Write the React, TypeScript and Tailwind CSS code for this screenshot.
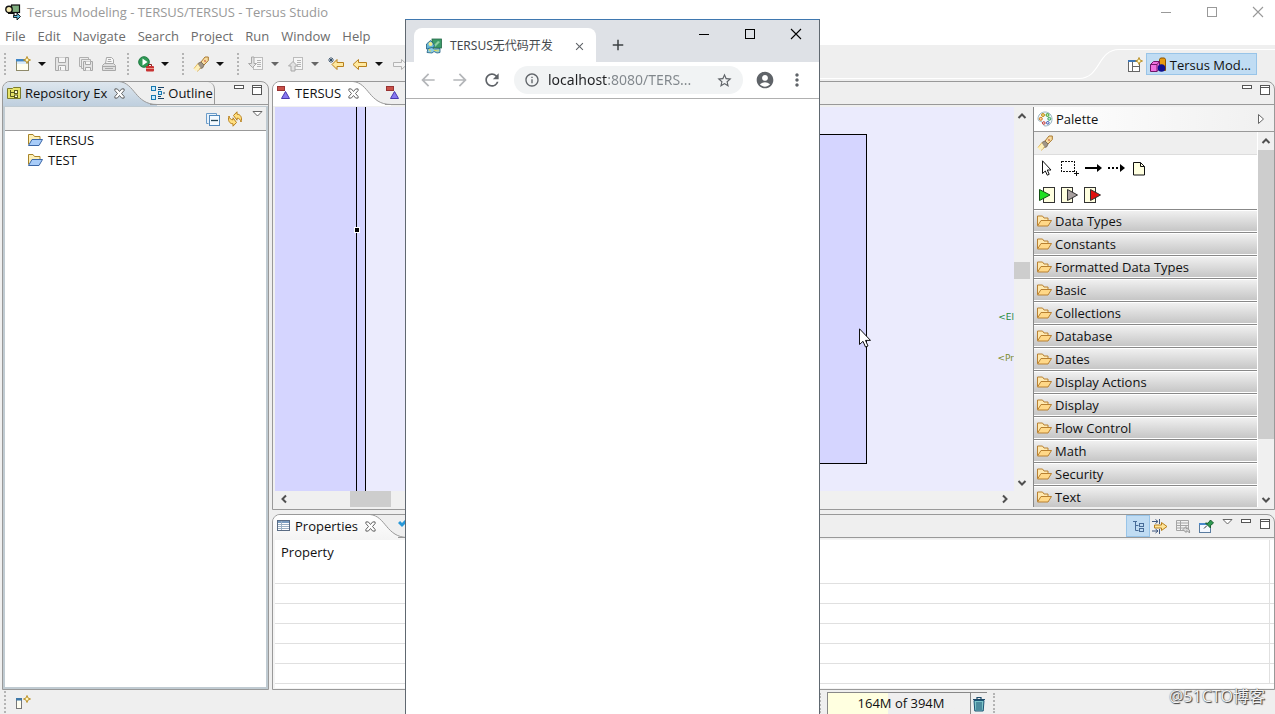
import React from 'react';
import {
  MdAccountCircle,
  MdAdd,
  MdArrowBack,
  MdArrowForward,
  MdClose,
  MdInfoOutline,
  MdMoreVert,
  MdRefresh,
  MdStarBorder,
} from 'react-icons/md';

type IconProps = { children: React.ReactNode; className?: string; box?: string };

function Icon({ children, className = 'size-4', box = '0 0 16 16' }: IconProps) {
  return (
    <svg viewBox={box} className={`block shrink-0 ${className}`} fill="none" aria-hidden="true">
      {children}
    </svg>
  );
}

function ToolButton({ label, children, className = '' }: { label: string; children: React.ReactNode; className?: string }) {
  return (
    <button type="button" aria-label={label} className={`block shrink-0 ${className}`}>
      {children}
    </button>
  );
}

/* ---------- window chrome icons ---------- */

const MinimizeLine = () => (
  <Icon className="size-3" box="0 0 12 12">
    <path d="M1 6.5h10" stroke="currentColor" shapeRendering="crispEdges" />
  </Icon>
);
const MaximizeBox = () => (
  <Icon className="size-3" box="0 0 12 12">
    <rect x="1.5" y="1.5" width="9" height="9" stroke="currentColor" shapeRendering="crispEdges" />
  </Icon>
);
const CloseCross = () => (
  <Icon className="size-3" box="0 0 12 12">
    <path d="M1 1l10 10M11 1L1 11" stroke="currentColor" strokeWidth="1.1" />
  </Icon>
);
const PaneMin = () => (
  <Icon className="h-3 w-[11px]" box="0 0 11 12">
    <rect x=".5" y="1.5" width="9" height="3" stroke="#555" fill="#fff" shapeRendering="crispEdges" />
  </Icon>
);
const PaneMax = () => (
  <Icon className="h-3 w-[11px]" box="0 0 11 12">
    <rect x=".5" y="1.5" width="9" height="9" stroke="#555" fill="#fff" shapeRendering="crispEdges" />
    <path d="M1 3.5h9" stroke="#555" shapeRendering="crispEdges" />
  </Icon>
);
const ViewMenu = () => (
  <Icon className="h-3 w-[11px]" box="0 0 11 12">
    <path d="M1 1.5h9L5.500 6z" stroke="#666" fill="#fff" />
  </Icon>
);
const TabClose = () => (
  <Icon className="size-[11px]" box="0 0 12 12">
    <path
      d="M1 1h2.600L6 3.800 8.400 1H11v1.800L8.200 6 11 9.200V11H8.400L6 8.200 3.600 11H1V9.200L3.800 6 1 2.800z"
      stroke="#555"
      fill="#fff"
    />
  </Icon>
);

/* ---------- workbench icons ---------- */

const AppIcon = () => (
  <Icon>
    <rect x="6.500" y="1" width="8" height="7.500" fill="#7fae7f" stroke="#111" strokeWidth="1.200" />
    <circle cx="4" cy="5.500" r="3.200" fill="#f5eab0" stroke="#111" strokeWidth="1.400" />
    <path d="M3 9.500h6v2.500" stroke="#111" strokeWidth="1.200" />
    <path d="M8.500 11.500H12V9l3.500 3.500L12 16v-2.500H8.500z" fill="#5fb8d8" stroke="#111" strokeWidth=".9" />
  </Icon>
);
const Sparkle = ({ x, y }: { x: number; y: number }) => (
  <path
    d={`M${x} ${y - 3.500}l1 2.500 2.500 1-2.500 1-1 2.500-1-2.500-2.500-1 2.500-1z`}
    fill="#fff6c0"
    stroke="#b88a1a"
    strokeWidth=".9"
  />
);
const NewIcon = () => (
  <Icon>
    <rect x="1.500" y="3.500" width="12" height="11" fill="#fffef0" stroke="#8f8a6a" />
    <path d="M1 3h10v2.500H1z" fill="#3f86c8" />
    <path d="M2 6h11v2H2z" fill="#d8ebfa" />
    <Sparkle x={12} y={4} />
  </Icon>
);
const SaveIcon = () => (
  <Icon>
    <path d="M1.500 1.500h13v13h-13z" fill="#e4e4e4" stroke="#a8a8a8" />
    <path d="M4.500 1.500v5h7v-5M4.500 14.500v-5h7v5" fill="#f6f6f6" stroke="#a8a8a8" />
    <path d="M6.500 11v3" stroke="#a8a8a8" />
  </Icon>
);
const SaveAllIcon = () => (
  <Icon>
    <path d="M1.500 1.500h9v9h-9z" fill="#ececec" stroke="#b0b0b0" />
    <path d="M3.500 3.500h9v9h-9z" fill="#ececec" stroke="#b0b0b0" />
    <path d="M5.500 5.500h9v9h-9z" fill="#e4e4e4" stroke="#a8a8a8" />
    <path d="M7.500 5.500v3h5v-3M7.500 14.500v-3h5v3" fill="#f6f6f6" stroke="#a8a8a8" />
  </Icon>
);
const PrintIcon = () => (
  <Icon>
    <path d="M4.500 7.500l1-6h5l2 2v4" fill="#f6f6f6" stroke="#a8a8a8" />
    <path d="M1.500 9.500l2-2h9l2 2v5h-13z" fill="#dedede" stroke="#a8a8a8" />
    <path d="M2 10.500h12M4 12.500h8M7 3.500h3M6.500 5.500h4" stroke="#a8a8a8" />
  </Icon>
);
const RunIcon = () => (
  <Icon>
    <circle cx="6" cy="6" r="5.300" fill="#2f9a55" stroke="#1d7a40" />
    <path d="M4.500 2.500l5 3.500-5 3.500z" fill="#fff" />
    <path d="M10.500 10V8.500h3V10" stroke="#8c1d1d" />
    <rect x="8" y="10" width="8" height="5.500" rx="1" fill="#c83232" />
    <path d="M8 12.500h8" stroke="#f0b0a0" strokeWidth=".8" />
  </Icon>
);
const FlashlightIcon = () => (
  <Icon>
    <path d="M8 6l4-5h3.300v3.500L11 9z" fill="#f8dca0" stroke="#a87830" />
    <path d="M5 7.500L8 6l3 3-1.500 3-3 .5z" fill="#a09688" stroke="#80705c" />
    <path d="M5 8L.8 12.500 2.500 15l5-3z" fill="#fff0b8" />
    <path d="M5 7.500L1 12.500M7.500 12.500L4 15.500" stroke="#e4bc60" />
    <path d="M11.500 4.500l1 1" stroke="#c04030" strokeWidth="1.200" />
  </Icon>
);
const ImportIcon = ({ up = false }: { up?: boolean }) => (
  <Icon>
    <rect x="5.500" y="1.500" width="9" height="12" fill="#f6f6f6" stroke="#bcbcbc" />
    <path d="M9 4.500h4M9 6.500h4M9 8.500h4M9 10.500h4" stroke="#b4b4b4" />
    {up ? (
      <path d="M5 5.500l4.500 4.500H7v5H3v-5H.5z" fill="#e2e2e2" stroke="#a8a8a8" />
    ) : (
      <path d="M3.500 1h2.500v6.500h2.500l-4 4-4-4h3z" fill="#e2e2e2" stroke="#a8a8a8" />
    )}
  </Icon>
);
const BackArrow = ({ star = false }: { star?: boolean }) => (
  <Icon>
    <path
      d={star ? 'M4 8.500l5-5V6.500h6.500v4H9v3z' : 'M1 8.500l5.500-5v3H14.500v4h-8v3z'}
      fill="#ffe9a0"
      stroke="#b8801c"
    />
    {star && <path d="M3 1v6M0 4h6M1 2l4 4M5 2L1 6" stroke="#24405c" strokeWidth=".8" />}
  </Icon>
);
const ForwardArrow = () => (
  <Icon>
    <path d="M15 8.500l-5.500-5v3h-8v4h8v3z" fill="#f3f3f3" stroke="#b4b4b4" />
  </Icon>
);
const DropArrow = ({ dim = false }: { dim?: boolean }) => (
  <Icon className="h-4 w-2" box="0 0 8 16">
    <path d="M0 6h8L4 10z" fill={dim ? '#666' : '#111'} />
  </Icon>
);
const RepoIcon = () => (
  <Icon>
    <path d="M1.500 3.500h5l1-1h7v11h-13z" fill="#e6e36a" stroke="#7c7c2c" />
    <path d="M4.500 5v6.500H8M4.500 7.500H8" stroke="#5a5a20" />
    <rect x="8.500" y="5.500" width="3" height="3" fill="#fffde0" stroke="#5a5a20" />
    <rect x="8.500" y="10" width="3" height="2.500" fill="#fffde0" stroke="#5a5a20" />
  </Icon>
);
const OutlineIcon = () => (
  <Icon>
    <rect x="1.500" y="1.500" width="4" height="4" fill="#c8ecff" stroke="#1878b0" />
    <rect x="1.500" y="10.500" width="4" height="4" fill="#c8ecff" stroke="#1878b0" />
    <rect x="8.500" y="6.500" width="3" height="3" fill="#c8ecff" stroke="#1878b0" />
    <path d="M8 2.500h6M8 13.500h6M13 8h2M8 4.500h3M8 11.500h3" stroke="#1a4468" />
  </Icon>
);
const ModelIcon = () => (
  <Icon>
    <rect x="1.500" y="1.500" width="7" height="4" fill="#c85048" stroke="#933" />
    <path d="M9.500 6.500l4 7h-8z" fill="#8878f0" stroke="#4838b0" />
  </Icon>
);
const CollapseAll = () => (
  <Icon>
    <path d="M3.500 12.500h-2v-10h10v2" stroke="#6c9cc8" fill="#e8f2fb" />
    <rect x="4.500" y="4.500" width="10" height="10" fill="#f4faff" stroke="#5088bc" />
    <path d="M6 9.500h7" stroke="#245" strokeWidth="1.300" />
  </Icon>
);
const LinkEditor = () => (
  <Icon>
    <path d="M6.500 4.500L10 .8v2.400c3.500 0 5.500 3.300 4 7.800-.6-2.600-1.800-3.800-4-3.800v2z" fill="#ffdf80" stroke="#b8801c" />
    <path d="M9.500 11.500L6 15.200v-2.400c-3.500 0-5.500-3.300-4-7.800.6 2.600 1.800 3.800 4 3.800v-2z" fill="#ffdf80" stroke="#b8801c" />
  </Icon>
);
const ProjectFolder = () => (
  <Icon>
    <path d="M1.500 12.500v-10h4.500l1.500 2h5.500v3" fill="#fdf0b8" stroke="#a88428" />
    <path d="M1.500 13.500L5 7.500h10.500l-3.500 6z" fill="#a8ccf8" stroke="#3c68a8" />
  </Icon>
);
const DrawerFolder = () => (
  <Icon>
    <path d="M1.500 12.500v-9.500h5l1.500 2h4v2.500" fill="#ffe9b0" stroke="#b88030" />
    <path d="M1.500 13L5 7.500h10.500L12 13z" fill="#ffd888" stroke="#b88030" />
  </Icon>
);
const PerspectiveIcon = () => (
  <Icon>
    <rect x="1.500" y="3.500" width="11" height="11" fill="#fff" stroke="#666" />
    <path d="M1 3h9v2H1z" fill="#3f78b8" />
    <path d="M5.500 5v9M5.500 9.500H12" stroke="#666" />
    <Sparkle x={12} y={4} />
  </Icon>
);
const CubesIcon = () => (
  <Icon>
    <path d="M9.500 2.500l1-1.500h4l1 1.500v11h-6z" fill="#e89a10" stroke="#8a5200" />
    <path d="M.5 7.500l3-3h6v7l-2.500 3H.5z" fill="#f070e0" stroke="#701868" />
    <path d="M.5 7.500H7v7M7 7.500l2.500-3" stroke="#701868" />
    <circle cx="11.500" cy="11" r="3.800" fill="#101090" />
  </Icon>
);
const PaletteIcon = () => (
  <Icon>
    <path d="M8 1c4 0 7 3 7 7 0 4.500-3 7-7 7-2 0-1.500-3-3-4S1 10.500 1 8c0-4 3-7 7-7z" fill="#f6fafc" stroke="#9ab4c0" />
    <circle cx="6" cy="4" r="1.500" fill="#f0d878" stroke="#c09020" />
    <circle cx="10.500" cy="4" r="1.500" fill="#c0e8a0" stroke="#40a040" />
    <circle cx="3.800" cy="7.800" r="1.500" fill="#ffd0a0" stroke="#d08020" />
    <circle cx="12.300" cy="7.800" r="1.500" fill="#b0e8c0" stroke="#40a060" />
    <circle cx="6.800" cy="12" r="1.300" fill="#fff" stroke="#c03030" />
    <circle cx="10.800" cy="11.800" r="1.300" fill="#fff" stroke="#3050b0" />
  </Icon>
);
const PointerIcon = () => (
  <Icon>
    <path d="M3.500 .8v12.700l2.800-2.500 2 4.200 1.900-.9-1.900-4.300h3.700z" fill="#fff" stroke="#111" />
  </Icon>
);
const MarqueeIcon = () => (
  <Icon className="h-4 w-[18px]" box="0 0 18 16">
    <rect x=".5" y="1.500" width="13" height="10" stroke="#111" strokeDasharray="2 1" shapeRendering="crispEdges" />
    <path d="M15.500 11v5M13 13.500h5" stroke="#111" shapeRendering="crispEdges" />
  </Icon>
);
const FlowArrow = ({ dashed = false }: { dashed?: boolean }) => (
  <Icon className="h-4 w-[17px]" box="0 0 17 16">
    <path d="M0 8h12" stroke="#000" strokeWidth="2" strokeDasharray={dashed ? '2 2' : undefined} shapeRendering="crispEdges" />
    <path d="M12 4l5 4-5 4z" fill="#000" />
  </Icon>
);
const NoteIcon = () => (
  <Icon>
    <path d="M2.500 2.500h7l4 4v8.500h-11z" fill="#ffffe0" stroke="#111" />
    <path d="M9.500 2.500v4h4" stroke="#111" />
  </Icon>
);
const TriggerIcon = () => (
  <Icon>
    <rect x="4.500" y=".5" width="11" height="15" fill="#ffffe0" stroke="#333" />
    <path d="M.5 2.500L11 8 .5 13.500z" fill="#20e020" stroke="#145014" />
  </Icon>
);
const ExitIcon = ({ fill }: { fill: string }) => (
  <Icon className="h-4 w-[17px]" box="0 0 17 16">
    <rect x=".5" y=".5" width="11" height="15" fill="#ffffe0" stroke="#333" />
    <path d="M6.500 2.500L16.500 8l-10 5.500z" fill={fill} stroke="#333" />
  </Icon>
);
const PropertiesIcon = () => (
  <Icon>
    <rect x="1.500" y="2.500" width="12" height="10" fill="#fff" stroke="#5a6c84" />
    <path d="M2 3h11v2H2z" fill="#7a9cc0" />
    <path d="M5.500 3v9M2 6.500h11M2 8.500h11M2 10.500h11" stroke="#9ab0c4" />
  </Icon>
);
const TreeModeIcon = () => (
  <Icon>
    <path d="M3 3.500h4M5.500 3.500v9h3M5.500 7.500h3" stroke="#486c98" />
    <rect x="9.500" y="5.500" width="4" height="3" stroke="#486c98" />
    <rect x="9.500" y="10.500" width="4" height="3" stroke="#486c98" />
  </Icon>
);
const AdvancedIcon = () => (
  <Icon>
    <path d="M0 3.500h6M3.500 1.500l2.500 2-2.500 2M0 13h6M3.500 11l2.500 2-2.500 2" stroke="#405880" />
    <path d="M7.500 1v5M7.500 11v5" stroke="#405880" />
    <path d="M2.500 7h7V4.500L15 8.500l-5.500 4V10h-7z" fill="#ffe498" stroke="#b8801c" />
  </Icon>
);
const RestoreIcon = () => (
  <Icon>
    <path d="M1.500 2.500h12v10h-12z" fill="#f2f2f2" stroke="#a4a4a4" />
    <path d="M1.500 5h12M1.500 7.500h12M1.500 10h12M5.500 3v9" stroke="#a4a4a4" />
    <path d="M8 11.500l3-3v2c3 0 4 1.500 3.500 4.500-.8-1.500-2-2-3.500-2v1.500z" fill="#ddd" stroke="#999" />
  </Icon>
);
const PinIcon = () => (
  <Icon>
    <rect x="1.500" y="5.500" width="11" height="9" fill="#f4f8ff" stroke="#5a7ca0" />
    <path d="M1 5h12v2H1z" fill="#4a88cc" />
    <path d="M6 10.500l3-3" stroke="#333" />
    <path d="M7.500 5l2.500.3L12.500 2l3 3L12.500 7.500 12.500 10z" fill="#2e9a50" stroke="#186030" />
  </Icon>
);
const FastViewIcon = () => (
  <Icon>
    <rect x=".5" y="4.500" width="5" height="10" fill="#fffef0" stroke="#777" />
    <path d="M0 4h6v2.500H0z" fill="#3f78a8" />
    <Sparkle x={11} y={5} />
  </Icon>
);
const TrashIcon = () => (
  <Icon>
    <path d="M2 3.500h12M6 3V1.500h4V3" stroke="#1c4a68" strokeWidth="1.200" />
    <path d="M3 4.500h10l-.8 10.500H3.800z" fill="#7cc4c8" stroke="#1c5474" />
    <path d="M6 6v8M8 6v8M10 6v8" stroke="#1c5474" />
  </Icon>
);
const ChevronGlyph = ({ d }: { d: string }) => (
  <Icon className="size-[10px]" box="0 0 10 10">
    <path d={d} stroke="#505050" strokeWidth="2" />
  </Icon>
);
const UP = 'M1.500 7L5 3.500 8.500 7';
const DOWN = 'M1.500 3L5 6.500 8.500 3';
const LEFT = 'M7 1.500L3.500 5 7 8.500';
const RIGHT = 'M3 1.500L6.500 5 3 8.500';

const Favicon = () => (
  <Icon>
    <rect x="6" y="1" width="9.500" height="9" fill="#3c9a68" stroke="#246848" strokeWidth=".8" />
    <path d="M8 7l4-4 2 1-5 5z" fill="#8ed0a0" />
    <path d="M.5 11V6l4-3.500L7 5l1.500 3-3 3z" fill="#68b8d8" stroke="#1c5c80" strokeWidth=".8" />
    <circle cx="4.500" cy="6" r="2" fill="#f4ec90" />
    <path d="M1 14.500l1-4 4-1 2 1.500 6-.5v4l-3 .5-3-1.500-2 1.500z" fill="#8ccce0" stroke="#1c5c80" strokeWidth=".8" />
    <path d="M3 11l1.500 2.500M8 12l3 1M12 11.500v2" stroke="#e8d840" />
  </Icon>
);

/* ---------- shared pieces ---------- */

const Grip = ({ className = '' }: { className?: string }) => (
  <span className={`w-0 shrink-0 border-l-2 border-dotted border-[#b4b4b4] ${className}`} />
);

function TabCurve({ from, to, id }: { from: string; to: string; id: string }) {
  return (
    <svg viewBox="0 0 40 24" className="-ml-2 block h-6 w-10 shrink-0" fill="none" aria-hidden="true">
      <defs>
        <linearGradient id={id} x1="0" y1="0" x2="0" y2="1">
          <stop offset="0" stopColor={from} />
          <stop offset="1" stopColor={to} />
        </linearGradient>
      </defs>
      <path d="M0 0h2C18 1 18 22.500 40 22.500V24H0z" fill={`url(#${id})`} />
      <path d="M0 -.5h2C18 1 18 22.500 40 22.500" stroke="#999" />
    </svg>
  );
}

function ActiveTab({ icon, label, bg }: { icon: React.ReactNode; label: string; bg: string }) {
  return (
    <div className={`flex h-6 items-center rounded-tl-[7px] pb-[2px] pl-[3px] ${bg}`}>
      <button type="button" className="flex items-center gap-[3px] whitespace-nowrap">
        {icon}
        {label}
      </button>
      <button type="button" aria-label={`Close ${label}`} className="relative z-10 ml-[7px]">
        <TabClose />
      </button>
    </div>
  );
}

const menus = ['File', 'Edit', 'Navigate', 'Search', 'Project', 'Run', 'Window', 'Help'];
const drawers = [
  'Data Types',
  'Constants',
  'Formatted Data Types',
  'Basic',
  'Collections',
  'Database',
  'Dates',
  'Display Actions',
  'Display',
  'Flow Control',
  'Math',
  'Security',
  'Text',
];

function TitleBar() {
  return (
    <header className="shrink-0 bg-white">
      <div className="flex h-6 items-center pl-[5px] pr-[11px] text-[#999]">
        <AppIcon />
        <h1 className="ml-[6px] flex-1">Tersus Modeling - TERSUS/TERSUS - Tersus Studio</h1>
        <div className="flex items-center gap-[34px]">
          <ToolButton label="Minimize"><MinimizeLine /></ToolButton>
          <ToolButton label="Maximize"><MaximizeBox /></ToolButton>
          <ToolButton label="Close"><CloseCross /></ToolButton>
        </div>
      </div>
      <nav className="flex h-[21px] items-center gap-3 pl-[5px] pt-[3px] text-[#6c6c6c]">
        {menus.map((m) => (
          <button key={m} type="button">{m}</button>
        ))}
      </nav>
    </header>
  );
}

function MainToolbar() {
  return (
    <div className="flex h-9 shrink-0 items-stretch">
      <div className="flex items-center pl-1 pt-[2px]">
        <Grip className="h-[22px]" />
        <ToolButton label="New" className="ml-[9px]"><NewIcon /></ToolButton>
        <ToolButton label="New options" className="ml-[7px]"><DropArrow /></ToolButton>
        <ToolButton label="Save" className="ml-2"><SaveIcon /></ToolButton>
        <ToolButton label="Save all" className="ml-2"><SaveAllIcon /></ToolButton>
        <ToolButton label="Print" className="ml-[7px]"><PrintIcon /></ToolButton>
        <Grip className="ml-[10px] h-[22px]" />
        <ToolButton label="Run" className="ml-[9px]"><RunIcon /></ToolButton>
        <ToolButton label="Run options" className="ml-[7px]"><DropArrow /></ToolButton>
        <Grip className="ml-[13px] h-[22px]" />
        <ToolButton label="Search" className="ml-[9px]"><FlashlightIcon /></ToolButton>
        <ToolButton label="Search options" className="ml-[7px]"><DropArrow /></ToolButton>
        <Grip className="ml-[13px] h-[22px]" />
        <ToolButton label="Next annotation" className="ml-[9px]"><ImportIcon /></ToolButton>
        <ToolButton label="Next annotation options" className="ml-[7px]"><DropArrow dim /></ToolButton>
        <ToolButton label="Previous annotation" className="ml-[9px]"><ImportIcon up /></ToolButton>
        <ToolButton label="Previous annotation options" className="ml-[7px]"><DropArrow dim /></ToolButton>
        <ToolButton label="Last edit location" className="ml-[9px]"><BackArrow star /></ToolButton>
        <ToolButton label="Back" className="ml-2"><BackArrow /></ToolButton>
        <ToolButton label="Back options" className="ml-[7px]"><DropArrow /></ToolButton>
        <ToolButton label="Forward" className="ml-[9px]"><ForwardArrow /></ToolButton>
      </div>
      <div className="mb-[2px] flex-1 border-b border-white" />
      <svg viewBox="0 0 40 36" className="block h-9 w-10 shrink-0" fill="none" aria-hidden="true">
        <path d="M0 33.500C22 33 18 5 40 4.500" stroke="#fff" strokeWidth="1.200" />
      </svg>
      <div className="mt-1 flex items-start border-t border-white pl-2 pr-[18px] pt-[3px]">
        <ToolButton label="Open perspective" className="mt-1"><PerspectiveIcon /></ToolButton>
        <button
          type="button"
          className="ml-[3px] flex h-[22px] items-center gap-1 border border-[#98c4e8] bg-[#c0dcf3] pl-[3px] pr-[5px] pt-px"
        >
          <CubesIcon />
          Tersus Mod...
        </button>
      </div>
    </div>
  );
}

function RepositoryView() {
  return (
    <aside className="flex w-[267px] shrink-0 flex-col rounded-t-[8px] border border-[#999]">
      <div className="flex h-6 shrink-0">
        <ActiveTab icon={<RepoIcon />} label="Repository Ex" bg="bg-linear-to-b from-[#dde6ee] to-[#bfcfde]" />
        <TabCurve id="repoTab" from="#dde6ee" to="#bfcfde" />
        <div className="-ml-[7px] flex h-[23px] flex-1 justify-between border-b border-[#999]">
          <button
            type="button"
            className="flex items-center gap-[2px] rounded-tr-[7px] border-r border-[#999] pr-px"
          >
            <OutlineIcon />
            Outline
          </button>
          <div className="flex gap-[7px] pr-[5px] pt-[2px]">
            <ToolButton label="Minimize view" className="self-start"><PaneMin /></ToolButton>
            <ToolButton label="Maximize view" className="self-start"><PaneMax /></ToolButton>
          </div>
        </div>
      </div>
      <div className="flex min-h-0 flex-1 flex-col border-2 border-t border-[#c0cbd2] bg-white">
        <div className="flex h-6 shrink-0 items-center justify-end gap-[6px] border-b border-[#999] bg-[#efefef] pr-[3px]">
          <ToolButton label="Collapse all"><CollapseAll /></ToolButton>
          <ToolButton label="Link with editor"><LinkEditor /></ToolButton>
          <ToolButton label="View menu" className="ml-[3px] self-start pt-[3px]"><ViewMenu /></ToolButton>
        </div>
        <ul className="-mt-px pl-[22px]">
          {['TERSUS', 'TEST'].map((name) => (
            <li key={name} className="flex h-5 items-center gap-[5px]">
              <ProjectFolder />
              {name}
            </li>
          ))}
        </ul>
      </div>
    </aside>
  );
}

function ModelCanvas() {
  return (
    <div className="relative min-h-0 flex-1 overflow-hidden bg-[#ebebfd]">
      <div className="absolute inset-y-0 left-0 w-[82px] border-r border-black bg-[#d5d5ff]" />
      <div className="absolute inset-y-0 left-[82px] w-[9px] border-r border-black bg-[#d5d5ff]" />
      <div className="absolute left-[79px] top-[120px] size-[6px] border border-white bg-black" />
      <div className="absolute left-[160px] top-[27px] h-[330px] w-[432px] border border-black bg-[#d5d5ff]" />
      <span className="absolute right-0 top-[204px] font-['DejaVu_Sans'] text-[9px] leading-3 text-[#1e8a3a]">
        &lt;El
      </span>
      <span className="absolute right-0 top-[245px] font-['DejaVu_Sans'] text-[9px] leading-3 text-[#7c8c2c]">
        &lt;Pr
      </span>
    </div>
  );
}

function Palette() {
  return (
    <section className="flex w-[241px] shrink-0 flex-col border-l border-[#888] bg-white">
      <div className="flex h-[25px] shrink-0 items-center gap-[3px] border-b border-[#999] bg-linear-to-r from-white to-[#f0f0f0] pl-[3px] pr-[9px]">
        <PaletteIcon />
        <h2 className="flex-1">Palette</h2>
        <ToolButton label="Collapse palette">
          <Icon className="h-3 w-2" box="0 0 8 12">
            <path d="M1.500 1.500l5 4.500-5 4.500z" fill="#fff" stroke="#666" />
          </Icon>
        </ToolButton>
      </div>
      <div className="flex min-h-0 flex-1">
        <div className="flex min-w-0 flex-1 flex-col overflow-hidden">
          <div className="flex h-[23px] shrink-0 items-center border-b border-[#ddd] bg-[#efefef] pl-[3px]">
            <ToolButton label="Search palette"><FlashlightIcon /></ToolButton>
          </div>
          <div className="flex h-[54px] shrink-0 flex-col gap-[11px] pl-[5px] pt-[5px]">
            <div className="flex items-center gap-[6px]">
              <ToolButton label="Select"><PointerIcon /></ToolButton>
              <ToolButton label="Marquee"><MarqueeIcon /></ToolButton>
              <ToolButton label="Flow"><FlowArrow /></ToolButton>
              <ToolButton label="Optional flow"><FlowArrow dashed /></ToolButton>
              <ToolButton label="Note"><NoteIcon /></ToolButton>
            </div>
            <div className="flex items-center gap-[6px]">
              <ToolButton label="Trigger"><TriggerIcon /></ToolButton>
              <ToolButton label="Exit"><ExitIcon fill="#a8a0a0" /></ToolButton>
              <ToolButton label="Error exit"><ExitIcon fill="#e01010" /></ToolButton>
            </div>
          </div>
          {drawers.map((name) => (
            <button
              key={name}
              type="button"
              className="h-[23px] shrink-0 border-b border-t border-b-white border-t-[#888] text-left"
            >
              <span className="flex h-full items-center gap-[3px] border-t border-white bg-linear-to-b from-[#f0f0f0] to-[#c6c6c6] pl-[2px]">
                <DrawerFolder />
                {name}
              </span>
            </button>
          ))}
        </div>
        <div className="ml-px flex w-4 shrink-0 flex-col items-center bg-[#f0f0f0]">
          <button type="button" aria-label="Scroll palette up" className="py-1"><ChevronGlyph d={UP} /></button>
          <div className="h-[289px] w-full bg-[#cdcdcd]" />
          <button type="button" aria-label="Scroll palette down" className="mt-auto py-[2px]"><ChevronGlyph d={DOWN} /></button>
        </div>
      </div>
    </section>
  );
}

function EditorArea() {
  return (
    <section className="flex min-h-0 flex-1 flex-col rounded-t-[8px] border border-[#999]">
      <div className="flex h-6 shrink-0 overflow-hidden">
        <ActiveTab icon={<ModelIcon />} label="TERSUS" bg="bg-white" />
        <TabCurve id="editorTab" from="#fff" to="#fff" />
        <div className="-ml-[6px] flex h-[23px] flex-1 items-center justify-between border-b border-[#999]">
          <button type="button" className="flex items-center gap-1">
            <ModelIcon />
            TEST
          </button>
          <div className="flex gap-[7px] self-start pr-[3px] pt-[2px]">
            <ToolButton label="Minimize editor"><PaneMin /></ToolButton>
            <ToolButton label="Maximize editor"><PaneMax /></ToolButton>
          </div>
        </div>
      </div>
      <div className="flex min-h-0 flex-1 bg-[#f0f0f0] pb-[2px] pl-[2px] pt-px">
        <div className="flex min-w-0 flex-1 flex-col">
          <div className="flex min-h-0 flex-1">
            <ModelCanvas />
            <div className="flex w-4 shrink-0 flex-col items-center">
              <button type="button" aria-label="Scroll up" className="py-1"><ChevronGlyph d={UP} /></button>
              <div className="mt-[137px] h-[17px] w-full bg-[#cdcdcd]" />
              <button type="button" aria-label="Scroll down" className="mt-auto py-[3px]"><ChevronGlyph d={DOWN} /></button>
            </div>
          </div>
          <div className="flex h-4 shrink-0 items-center pr-5">
            <button type="button" aria-label="Scroll left" className="px-1"><ChevronGlyph d={LEFT} /></button>
            <div className="ml-[57px] h-full w-[41px] bg-[#cdcdcd]" />
            <button type="button" aria-label="Scroll right" className="ml-auto"><ChevronGlyph d={RIGHT} /></button>
          </div>
        </div>
        <div className="w-[3px] shrink-0" />
        <Palette />
      </div>
    </section>
  );
}

function PropertiesView() {
  return (
    <section className="flex h-[176px] shrink-0 flex-col rounded-t-[8px] border border-[#999]">
      <div className="flex h-6 shrink-0 overflow-hidden">
        <ActiveTab icon={<PropertiesIcon />} label="Properties" bg="bg-linear-to-b from-white to-[#f4f4f4]" />
        <TabCurve id="propsTab" from="#fff" to="#f4f4f4" />
        <div className="-ml-[10px] flex h-[23px] flex-1 items-center justify-between border-b border-[#999]">
          <button type="button" className="flex items-center gap-1">
            <Icon className="-mt-1 size-4">
              <path d="M1 6l3 3 6-6" stroke="#2898d8" strokeWidth="3" />
            </Icon>
            Validation
          </button>
          <div className="flex h-full items-center pr-[3px]">
            <ToolButton label="Show as tree" className="flex h-[22px] w-6 items-center justify-center border border-[#98c4e8] bg-[#c0dcf3]">
              <TreeModeIcon />
            </ToolButton>
            <ToolButton label="Show advanced" className="ml-[2px]"><AdvancedIcon /></ToolButton>
            <ToolButton label="Restore default" className="ml-[7px]"><RestoreIcon /></ToolButton>
            <ToolButton label="Pin to selection" className="ml-[7px]"><PinIcon /></ToolButton>
            <div className="ml-2 flex gap-2 self-start pt-[3px]">
              <ToolButton label="Properties menu"><ViewMenu /></ToolButton>
              <ToolButton label="Minimize properties"><PaneMin /></ToolButton>
              <ToolButton label="Maximize properties"><PaneMax /></ToolButton>
            </div>
          </div>
        </div>
      </div>
      <div className="min-h-0 flex-1 bg-[#f4f4f4] pb-px pl-[2px] pt-px">
        <div className="h-full overflow-hidden bg-white">
          <table className="w-full border-collapse">
            <thead>
              <tr>
                <th className="h-[23px] border-r border-[#e0e0e0] pl-[6px] text-left font-normal">Property</th>
                <th className="w-[5px]" />
              </tr>
            </thead>
            <tbody>
              {[0, 1, 2, 3, 4, 5].map((row) => (
                <tr key={row}>
                  <td className="h-5 border-b border-r border-[#e0e0e0]" />
                  <td className="w-[5px] border-b border-[#e0e0e0]" />
                </tr>
              ))}
            </tbody>
          </table>
        </div>
      </div>
    </section>
  );
}

function StatusBar() {
  return (
    <footer className="flex h-6 shrink-0 items-center justify-between pl-1 pr-[280px]">
      <div className="flex items-center">
        <Grip className="h-[22px]" />
        <ToolButton label="Fast view" className="ml-[10px]"><FastViewIcon /></ToolButton>
      </div>
      <div className="flex items-center self-end">
        <Grip className="h-5" />
        <div className="ml-[6px] flex h-[22px] w-[144px] items-center justify-center border-l border-r border-t border-[#888] bg-linear-to-r from-[#ffffe0] from-[42%] to-[#efefef] to-[42%] pb-[2px] pl-1">
          164M of 394M
        </div>
        <ToolButton label="Run garbage collector" className="h-[22px] border-t border-[#888] pt-px"><TrashIcon /></ToolButton>
        <Grip className="ml-[6px] h-5" />
      </div>
    </footer>
  );
}

function BrowserWindow() {
  return (
    <section className="absolute bottom-0 left-[405px] top-[19px] z-20 flex w-[415px] flex-col border-l border-r border-t border-[#606870] border-t-[#3f78b0] bg-white font-['Noto_Sans','Noto_Sans_CJK_SC',sans-serif]">
      <div className="flex h-[42px] shrink-0 items-end bg-[#dee1e6] pl-2">
        <div className="flex h-[34px] w-[182px] items-center rounded-t-lg bg-white pl-3 pr-[10px] pt-[2px] text-[12px] text-[#45494d]">
          <Favicon />
          <span className="ml-2 flex-1 whitespace-nowrap">TERSUS无代码开发</span>
          <ToolButton label="Close tab"><MdClose className="size-[13px] stroke-[#5f6368] text-[#5f6368]" /></ToolButton>
        </div>
        <ToolButton label="New tab" className="mb-[8px] ml-[13px]"><MdAdd className="size-[18px] text-[#3c4043]" /></ToolButton>
        <div className="ml-auto flex gap-[34px] self-start pr-[17px] pt-2 text-black">
          <ToolButton label="Minimize browser"><MinimizeLine /></ToolButton>
          <ToolButton label="Maximize browser"><MaximizeBox /></ToolButton>
          <ToolButton label="Close browser"><CloseCross /></ToolButton>
        </div>
      </div>
      <div className="flex h-[37px] shrink-0 items-center border-b border-[#b0b0b0] pl-3 pr-3 text-[#5f6368]">
        <ToolButton label="Go back"><MdArrowBack className="size-5 text-[#b4b6b9]" /></ToolButton>
        <ToolButton label="Go forward" className="ml-3"><MdArrowForward className="size-5 text-[#b4b6b9]" /></ToolButton>
        <ToolButton label="Reload" className="ml-3"><MdRefresh className="size-5" /></ToolButton>
        <div className="ml-3 flex h-7 flex-1 items-center rounded-full bg-[#f1f3f4] pl-[10px] pr-[10px]">
          <MdInfoOutline className="size-4 shrink-0" />
          <input
            aria-label="Address"
            defaultValue="localhost:8080/TERS..."
            className="ml-2 w-0 flex-1 bg-linear-to-r from-[#202124] from-[60px] to-[#80868b] to-[60px] bg-clip-text text-[14px] text-transparent outline-none"
          />
          <ToolButton label="Bookmark"><MdStarBorder className="size-[17px]" /></ToolButton>
        </div>
        <ToolButton label="Profile" className="ml-3"><MdAccountCircle className="size-5" /></ToolButton>
        <ToolButton label="Browser menu" className="ml-3"><MdMoreVert className="size-5" /></ToolButton>
      </div>
    </section>
  );
}

export default function App() {
  return (
    <div className="relative flex h-screen flex-col overflow-hidden bg-[#efefef] font-['Open_Sans','Noto_Sans_CJK_SC',sans-serif] text-[13px] leading-5 text-[#111]">
      <TitleBar />
      <MainToolbar />
      <main className="flex min-h-0 flex-1 gap-[3px] pl-[2px]">
        <RepositoryView />
        <div className="flex min-w-0 flex-1 flex-col gap-1">
          <EditorArea />
          <PropertiesView />
        </div>
      </main>
      <StatusBar />
      <BrowserWindow />
      <svg viewBox="0 0 12 20" className="absolute left-[859px] top-[328px] z-30 h-5 w-3" aria-hidden="true">
        <path d="M.5.8v15.700l3.500-3.200 2.500 5.700 2.500-1-2.500-5.600h5z" fill="#fff" stroke="#111" />
      </svg>
      <span className="absolute bottom-2 right-[10px] z-30 text-[16px] text-[#f4f4f4] [text-shadow:1px_1px_1px_#333,0_0_1px_#555]">
        @51CTO博客
      </span>
    </div>
  );
}
